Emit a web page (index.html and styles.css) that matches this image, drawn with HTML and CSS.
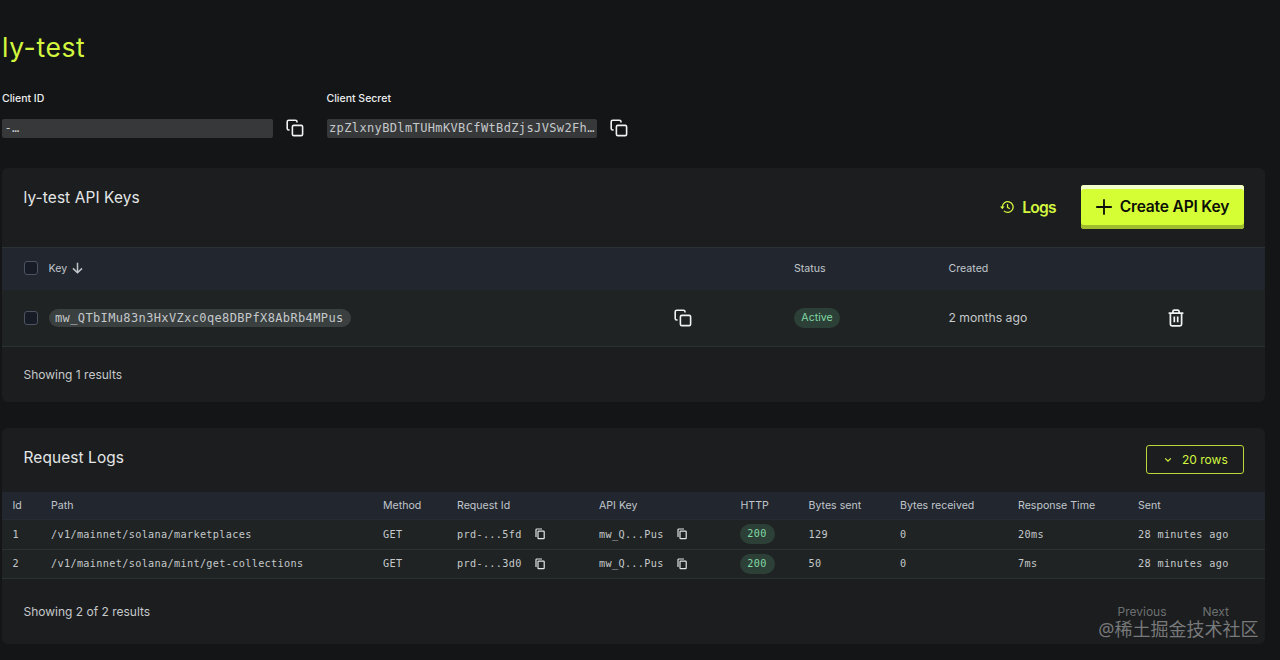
FILE: index.html
```html
<!DOCTYPE html>
<html lang="en">
<head>
    <meta charset="UTF-8">
    <meta name="viewport" content="width=device-width, initial-scale=1.0">
    <title>ly-test</title>
    <link rel="stylesheet" href="styles.css">
</head>
<body>
    <svg class="sprite" width="0" height="0">
        <symbol id="copy" viewBox="0 0 18 18">
            <rect x="6.4" y="6.4" width="10.2" height="10.2" rx="1.4"/>
            <path d="M3.6 11H2.8A1.6 1.6 0 0 1 1.2 9.4V2.8a1.6 1.6 0 0 1 1.6-1.6h6.6A1.6 1.6 0 0 1 11 2.8v.8"/>
        </symbol>
        <symbol id="copy-small" viewBox="0 0 10 12">
            <path d="M1 9V1.8a.8.8 0 0 1 .8-.8H7"/>
            <rect x="3" y="3.1" width="6.2" height="7.6" rx=".6"/>
        </symbol>
    </svg>

    <div class="page">
        <h1 class="title">ly-test</h1>

        <div class="credentials">
            <div class="credential">
                <div class="credential-label">Client ID</div>
                <div class="credential-row">
                    <code class="secret">-…</code>
                    <svg class="icon-copy"><use href="#copy"/></svg>
                </div>
            </div>
            <div class="credential">
                <div class="credential-label">Client Secret</div>
                <div class="credential-row">
                    <code class="secret">zpZlxnyBDlmTUHmKVBCfWtBdZjsJVSw2Fh…</code>
                    <svg class="icon-copy"><use href="#copy"/></svg>
                </div>
            </div>
        </div>

        <div class="panel keys">
            <div class="panel-header">
                <h2 class="panel-title">ly-test API Keys</h2>
                <div class="actions">
                    <a class="logs-link">
                        <svg class="icon-history" viewBox="0 0 14 14">
                            <path d="M2.3 7a5.4 5.4 0 1 1 1.6 3.9"/>
                            <path class="arrow" d="M0 6.6h4.6L2.3 9.2z"/>
                            <path d="M7.5 4v3.4l2.3 1.4"/>
                        </svg>
                        <span>Logs</span>
                    </a>
                    <button class="create-btn">
                        <svg class="icon-plus" viewBox="0 0 16 16"><path d="M8 .2v15.6M.2 8h15.6"/></svg>
                        <span>Create API Key</span>
                    </button>
                </div>
            </div>
            <table class="keys-table">
                <colgroup>
                    <col class="k-check"><col class="k-key"><col class="k-copy"><col class="k-status"><col class="k-created"><col>
                </colgroup>
                <thead>
                    <tr>
                        <th><span class="checkbox"></span></th>
                        <th>
                            <div class="sort">
                                <span>Key</span>
                                <svg class="icon-sort" viewBox="0 0 11 12"><path d="M5.5.8v9.8M1 6.4l4.5 4.4L10 6.4"/></svg>
                            </div>
                        </th>
                        <th></th>
                        <th>Status</th>
                        <th>Created</th>
                        <th></th>
                    </tr>
                </thead>
                <tbody>
                    <tr>
                        <td><span class="checkbox"></span></td>
                        <td><code class="key-pill">mw_QTbIMu83n3HxVZxc0qe8DBPfX8AbRb4MPus</code></td>
                        <td><svg class="icon-copy"><use href="#copy"/></svg></td>
                        <td><span class="badge">Active</span></td>
                        <td class="created">2 months ago</td>
                        <td>
                            <svg class="icon-trash" viewBox="0 0 16 18">
                                <path d="M.6 4.1h14.8M2.4 4.3v11a1.6 1.6 0 0 0 1.6 1.6h8a1.6 1.6 0 0 0 1.6-1.6v-11M4.9 3.8V2.5a1.3 1.3 0 0 1 1.3-1.3h3.6a1.3 1.3 0 0 1 1.3 1.3v1.3"/>
                                <path d="M6.3 7.5v5.8M9.7 7.5v5.8"/>
                            </svg>
                        </td>
                    </tr>
                </tbody>
            </table>
            <div class="panel-footer">
                <span>Showing 1 results</span>
            </div>
        </div>

        <div class="panel logs">
            <div class="panel-header">
                <h2 class="panel-title">Request Logs</h2>
                <button class="rows-btn">
                    <svg class="icon-chevron" viewBox="0 0 8 6"><path d="M1.2 1.4L4 4.2l2.8-2.8"/></svg>
                    <span>20 rows</span>
                </button>
            </div>
            <table class="logs-table">
                <colgroup>
                    <col class="l-id"><col class="l-path"><col class="l-method"><col class="l-request"><col class="l-key">
                    <col class="l-http"><col class="l-sent"><col class="l-received"><col class="l-time"><col>
                </colgroup>
                <thead>
                    <tr>
                        <th>Id</th>
                        <th>Path</th>
                        <th>Method</th>
                        <th>Request Id</th>
                        <th>API Key</th>
                        <th>HTTP</th>
                        <th>Bytes sent</th>
                        <th>Bytes received</th>
                        <th>Response Time</th>
                        <th>Sent</th>
                    </tr>
                </thead>
                <tbody>
                    <tr>
                        <td>1</td>
                        <td>/v1/mainnet/solana/marketplaces</td>
                        <td>GET</td>
                        <td><div class="copyable"><span>prd-...5fd</span><svg class="icon-copy-small"><use href="#copy-small"/></svg></div></td>
                        <td><div class="copyable"><span>mw_Q...Pus</span><svg class="icon-copy-small"><use href="#copy-small"/></svg></div></td>
                        <td><span class="http">200</span></td>
                        <td>129</td>
                        <td>0</td>
                        <td>20ms</td>
                        <td>28 minutes ago</td>
                    </tr>
                    <tr>
                        <td>2</td>
                        <td>/v1/mainnet/solana/mint/get-collections</td>
                        <td>GET</td>
                        <td><div class="copyable"><span>prd-...3d0</span><svg class="icon-copy-small"><use href="#copy-small"/></svg></div></td>
                        <td><div class="copyable"><span>mw_Q...Pus</span><svg class="icon-copy-small"><use href="#copy-small"/></svg></div></td>
                        <td><span class="http">200</span></td>
                        <td>50</td>
                        <td>0</td>
                        <td>7ms</td>
                        <td>28 minutes ago</td>
                    </tr>
                </tbody>
            </table>
            <div class="panel-footer">
                <span>Showing 2 of 2 results</span>
                <div class="pager">
                    <span>Previous</span>
                    <span>Next</span>
                </div>
            </div>
        </div>
    </div>
    <div class="watermark">@稀土掘金技术社区</div>
</body>
</html>
```
FILE: styles.css
```css
* {
    box-sizing: border-box;
}

body {
    margin: 0;
    height: 660px;
    overflow: hidden;
    background: #141517;
    color: #c5c9cb;
    font-family: Inter, 'Liberation Sans', sans-serif;
    font-size: 12px;
}

svg {
    display: block;
    flex: none;
    fill: none;
    stroke: currentColor;
}

.sprite {
    position: absolute;
}

code {
    font-family: 'DejaVu Sans Mono', monospace;
    font-size: 12px;
    letter-spacing: 0.37px;
}

.page {
    padding: 29px 15px 0 2px;
}

.title {
    margin: 0;
    height: 37px;
    line-height: 37px;
    font-size: 26.5px;
    font-weight: 400;
    letter-spacing: 0.6px;
    color: #d3f73f;
}

.credentials {
    display: flex;
    gap: 23px;
    margin-top: 25px;
}

.credential-label {
    height: 16px;
    line-height: 16px;
    font-size: 10.5px;
    font-weight: 500;
    color: #eceeef;
}

.credential-row {
    display: flex;
    align-items: center;
    margin-top: 12px;
}

.secret {
    width: 270.5px;
    height: 19px;
    margin-right: 13px;
    padding-left: 2.5px;
    line-height: 19px;
    border-radius: 2px;
    background: #37383a;
    white-space: nowrap;
}

.icon-copy {
    width: 18px;
    height: 18px;
    color: #f0f2f2;
    stroke-width: 1.6;
}

.credential-row .icon-copy {
    margin-top: -1px;
}

.panel {
    border-radius: 6px;
    background: #1c1d1f;
}

.panel-header {
    display: flex;
    justify-content: space-between;
    padding: 0 21px 0 21.5px;
}

.panel-title {
    margin: 0;
    line-height: 26px;
    font-size: 15.4px;
    font-weight: 400;
    letter-spacing: 0.12px;
    color: #e4e7e7;
}

.panel-footer {
    display: flex;
    align-items: center;
    justify-content: space-between;
    padding: 0 36px 0 21.5px;
}

table {
    width: 100%;
    table-layout: fixed;
    border-collapse: separate;
    border-spacing: 0;
}

th,
td {
    padding: 0;
    text-align: left;
    vertical-align: middle;
    font-weight: 400;
    white-space: nowrap;
}

th {
    background: #22262f;
    font-size: 10.6px;
    color: #c0c6cb;
}

td {
    background: #1f2323;
    border-bottom: 1px solid #293233;
}

.keys {
    height: 234px;
    margin-top: 30px;
}

.keys .panel-header {
    height: 79px;
    padding-top: 17px;
}

.actions {
    display: flex;
    height: 44px;
    align-items: center;
    gap: 25px;
    font-size: 15.6px;
    font-weight: 600;
}

.logs-link {
    display: flex;
    align-items: center;
    gap: 8px;
    color: #d3f73f;
    letter-spacing: -0.7px;
}

.icon-history {
    width: 14px;
    height: 14px;
    stroke-width: 1.3;
}

.arrow {
    fill: currentColor;
    stroke: none;
}

.create-btn {
    display: flex;
    width: 163px;
    height: 44px;
    align-items: center;
    justify-content: center;
    gap: 8px;
    padding: 0 0 1px;
    border: 0;
    border-radius: 3px;
    background: #d5ff34;
    box-shadow: inset 0 4px 0 #f3ffcb, inset 0 -4px 0 #9fbc2e;
    color: #0c0e08;
    font: inherit;
    letter-spacing: -0.2px;
}

.icon-plus {
    width: 16px;
    height: 16px;
    stroke-width: 1.8;
}

.keys-table th {
    height: 43px;
    padding-bottom: 2px;
    border-top: 1px solid #2b3236;
}

.keys-table td {
    height: 57px;
    padding-bottom: 1px;
}

.k-check { width: 46.5px; }
.k-key { width: 625.5px; }
.k-copy { width: 120px; }
.k-status { width: 154.5px; }
.k-created { width: 219px; }

.checkbox {
    display: block;
    width: 14px;
    height: 14px;
    margin-left: 22px;
    border: 1px solid #4c5361;
    border-radius: 3px;
    background: #171b25;
}

.sort {
    display: flex;
    align-items: center;
    gap: 5px;
}

.icon-sort {
    width: 11px;
    height: 12px;
    stroke-width: 1.5;
}

.key-pill {
    display: inline-block;
    width: 302px;
    height: 18px;
    padding-left: 6.5px;
    line-height: 18px;
    border-radius: 9px;
    background: #3a3f40;
    vertical-align: middle;
}

.badge,
.http {
    display: inline-block;
    height: 20px;
    line-height: 20px;
    border-radius: 10px;
    background: #2c4037;
    color: #83d9a5;
    text-align: center;
    vertical-align: middle;
}

.badge {
    width: 46px;
    font-size: 10.6px;
}

.http {
    width: 35px;
    margin-left: -1px;
}

.created {
    font-size: 12.2px;
}

.icon-trash {
    width: 16px;
    height: 18px;
    color: #f0f2f2;
    stroke-width: 1.7;
}

.keys .panel-footer {
    height: 55px;
}

.logs {
    height: 216px;
    margin-top: 26px;
}

.logs .panel-header {
    height: 64px;
    padding-top: 17px;
}

.rows-btn {
    display: flex;
    width: 98px;
    height: 29px;
    align-items: center;
    gap: 10px;
    padding: 0 0 0 17px;
    border: 1px solid #b9d83a;
    border-radius: 3px;
    background: none;
    color: #d3f73f;
    font: inherit;
}

.icon-chevron {
    width: 8px;
    height: 6px;
    stroke-width: 1.2;
}

.logs-table th,
.logs-table td {
    padding-left: 10.5px;
}

.logs-table th {
    height: 28px;
    border-bottom: 1px solid #262c31;
}

.logs-table td {
    height: 29.5px;
    font-family: 'DejaVu Sans Mono', monospace;
    font-size: 10.2px;
    letter-spacing: 0.34px;
}

.l-id { width: 38.5px; }
.l-path { width: 332px; }
.l-method { width: 74px; }
.l-request { width: 142px; }
.l-key { width: 141.5px; }
.l-http { width: 68px; }
.l-sent { width: 91.5px; }
.l-received { width: 118px; }
.l-time { width: 120px; }

.copyable {
    display: flex;
    align-items: center;
    gap: 13px;
}

.icon-copy-small {
    width: 10px;
    height: 12px;
    color: #e2e5e5;
    stroke-width: 1.2;
}

.logs .panel-footer {
    height: 65px;
}

.pager {
    display: flex;
    gap: 36px;
    color: #6d7071;
}

/* sits over the bottom right corner of the page */
.watermark {
    position: absolute;
    right: 21.5px;
    bottom: 19.5px;
    line-height: 24px;
    font-family: 'Noto Sans', 'Noto Sans CJK SC', sans-serif;
    font-size: 18px;
    color: #77797a;
}
```
